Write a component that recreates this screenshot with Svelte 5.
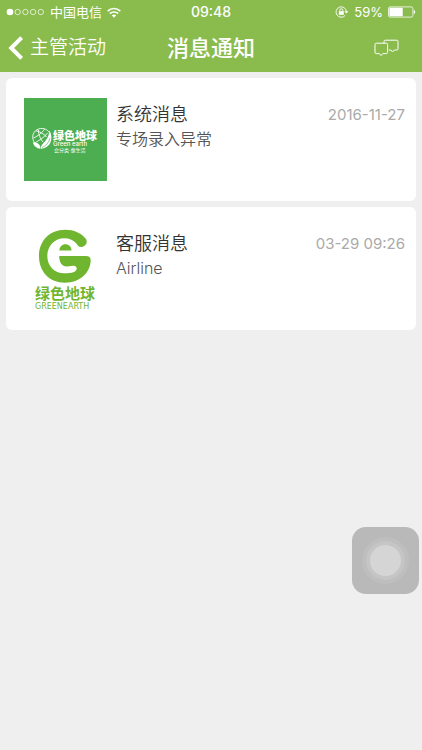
<script>
    let messages = [
        { id: 1, logo: "square", title: "系统消息", text: "专场录入异常", time: "2016-11-27" },
        { id: 2, logo: "round", title: "客服消息", text: "Airline", time: "03-29 09:26" }
    ];
    let dots = [1, 0, 0, 0, 0];
    let battery = 59;
</script>

<div class="page">
    <header>
        <div class="status">
            <div class="carrier">
                <svg class="dots" width="39" height="8" viewBox="0 0 39 8">
                    {#each dots as on, i}
                        <circle cx={4 + i * 7.7} cy="4" r={on ? 3.3 : 2.7} fill={on ? "#fff" : "none"} stroke="#fff" stroke-width={on ? 0 : 0.7} />
                    {/each}
                </svg>
                <span>中国电信</span>
                <svg width="14" height="11" viewBox="0 0 14 11" fill="none" stroke="#fff" stroke-width="1.7">
                    <path d="M0.7 4.2C4.3 0.6 9.7 0.6 13.3 4.2" />
                    <path d="M2.9 6.7C5.2 4.4 8.8 4.4 11.1 6.7" />
                    <path d="M7 10.8L4.8 8.5C6.1 7.3 7.9 7.3 9.2 8.5Z" fill="#fff" stroke="none" />
                </svg>
            </div>
            <strong>09:48</strong>
            <div class="power">
                <svg width="14" height="12" viewBox="0 0 14 12" fill="none" stroke="#fff" stroke-width="0.9">
                    <path d="M10.2 9.4A5.2 5.2 0 1 1 11.4 5.4" />
                    <path d="M9.4 5.2H13.4L11.4 7.6Z" fill="#fff" stroke="none" />
                    <rect x="3.8" y="5.2" width="5" height="3.6" fill="#fff" stroke="none" />
                    <path d="M4.8 5.5V4.2A1.5 1.5 0 0 1 7.8 4.2V5.5" />
                </svg>
                <span>{battery}%</span>
                <svg width="28" height="12" viewBox="0 0 28 12">
                    <rect x="0.5" y="0.9" width="24.4" height="10.2" rx="1.6" fill="none" stroke="#fff" stroke-width="0.8" />
                    <rect x="1.4" y="1.8" width={battery * 0.226} height="8.4" rx="0.6" fill="#fff" />
                    <path d="M25.8 4C27.6 4.5 27.6 7.5 25.8 8Z" fill="#fff" />
                </svg>
            </div>
        </div>
        <nav>
            <a class="back" href="#back">
                <svg width="16" height="24" viewBox="0 0 16 24" fill="none" stroke="#fff" stroke-width="4">
                    <path d="M13.6 1.6L3.2 12L13.6 22.4" />
                </svg>
                <span>主管活动</span>
            </a>
            <h1>消息通知</h1>
            <button class="chat" aria-label="聊天">
                <svg width="26" height="18" viewBox="0 0 26 18" fill="none" stroke="#fff" stroke-width="1" stroke-linejoin="round">
                    <path d="M10 4.2V2.4Q10 1.2 11.2 1.2H22.8Q24 1.2 24 2.4V9.8Q24 11 22.8 11H20.3L18.5 13L16.8 11H14.8" />
                    <path d="M2.2 4.2H12.4Q13.6 4.2 13.6 5.4V13.4Q13.6 14.6 12.4 14.6H8.8L7 16.6L5.4 14.6H2.2Q1 14.6 1 13.4V5.4Q1 4.2 2.2 4.2Z" />
                </svg>
            </button>
        </nav>
    </header>

    <main>
        {#each messages as item (item.id)}
            <a class="card" href="#message-{item.id}">
                {#if item.logo == "square"}
                    <svg class="logo" viewBox="0 0 83 83">
                        <rect width="83" height="83" fill="#4cae50" />
                        <g fill="none" stroke="#fff" stroke-width="0.9">
                            <path d="M11 45.5C7.5 41 8 34.5 13 31.7C17.5 29.2 23 30.6 25.2 34.5" />
                            <path d="M12 33C15 33 20 36 22.5 39" />
                            <path d="M9.5 40C14 38 19 34 20.5 31.2" />
                            <path d="M14.5 32C14 36 17 42 19 44" />
                            <path d="M11 45C15 42 20 40 23.5 35" />
                        </g>
                        <path d="M25.5 32.5C29.5 40 27.5 49.5 17 50.7C16 45.5 24.5 44 25.5 32.5Z" fill="#fff" />
                        <path d="M8.8 44.5C13 44 16.5 46 16.5 50.7C12.5 50.5 10 48 8.8 44.5Z" fill="#fff" />
                        <path d="M18 49.5C22 48 25 44.5 26 40" fill="none" stroke="#4cae50" stroke-width="0.6" />
                        <text class="brand" x="29" y="42">绿色地球</text>
                        <text class="latin" x="29" y="48">Green earth</text>
                        <text class="slogan" x="30" y="54">会分类·惠生活</text>
                    </svg>
                {:else}
                    <svg class="logo" viewBox="0 0 83 83">
                        <path
                            d="M62 12C57.5 6 50 2.7 41 2.7C25.5 2.7 15 14 15 29.2C15 44.5 25.5 55.7 41 55.7C56 55.7 66.7 45.5 66.7 33C66.7 30.2 65 29 62 29H40V12C46 12 50 14.5 52.5 17.8C54.5 20.3 58 20.8 60.5 18.8C62.8 17 63.3 14.4 62 12Z"
                            fill="#70b52f"
                        />
                        <path
                            d="M56.7 29C56.7 18 49.5 11.3 40.5 11.3C30.5 11.3 23.3 19 23.3 29C23.3 39 30.5 46.3 40 46.3C43.5 46.3 47 46 50 44.9C54.5 43 53 38 48.5 38.7C46.5 39 44.5 39.4 42.5 39.4C38 39.4 35.2 35.5 35.2 29Z"
                            fill="#fff"
                        />
                        <path d="M35.3 23.5C35.7 19.6 38 17.3 41.4 17.3C45 17.3 47.3 19.6 47.5 23.5Z" fill="#70b52f" />
                        <text class="name" x="11" y="72">绿色地球</text>
                        <text class="caption" x="11" y="82">GREENEARTH</text>
                    </svg>
                {/if}
                <div class="info">
                    <div class="row">
                        <h2>{item.title}</h2>
                        <time>{item.time}</time>
                    </div>
                    <p>{item.text}</p>
                </div>
            </a>
        {/each}
    </main>

    <button class="touch" aria-label="AssistiveTouch">
        <span></span>
    </button>
</div>

<style>
    :global(body) {
        background: #efefef;
    }
    .page {
        font-family: Inter, "Noto Sans CJK SC", sans-serif;
        color: #333;
    }
    a {
        color: inherit;
        text-decoration: none;
    }
    button {
        padding: 0;
        border: 0;
        background: none;
        cursor: pointer;
    }
    h1, h2, p {
        margin: 0;
    }
    svg {
        display: block;
        flex: none;
    }
    header {
        background: #8abb4d;
        color: white;
    }
    .status, nav {
        display: grid;
        grid-template-columns: 1fr auto 1fr;
        align-items: center;
    }
    .status {
        height: 24px;
        padding: 0 6px;
        font-size: 13px;
        line-height: 24px;
    }
    .status strong {
        font-size: 14px;
        font-weight: 500;
    }
    .carrier, .power {
        display: flex;
        align-items: center;
        gap: 5px;
    }
    .power {
        justify-content: flex-end;
    }
    nav {
        height: 48px;
        padding: 0 8px;
    }
    nav h1 {
        font-size: 22px;
        line-height: 32px;
        font-weight: 500;
    }
    .back {
        display: flex;
        align-items: center;
        gap: 6px;
        font-size: 19px;
        line-height: 28px;
        font-weight: 350;
    }
    .chat {
        justify-self: end;
        margin-right: 14px;
    }
    main {
        display: flex;
        flex-direction: column;
        gap: 6px;
        padding: 6px;
    }
    .card {
        display: flex;
        gap: 9px;
        padding: 20px 11px 20px 18px;
        border-radius: 6px;
        background: white;
    }
    .logo {
        width: 83px;
        height: 83px;
    }
    .info {
        flex: 1;
        padding-top: 5px;
    }
    .row {
        display: flex;
        justify-content: space-between;
        align-items: center;
    }
    h2 {
        font-size: 18px;
        line-height: 24px;
        font-weight: 350;
    }
    time {
        font-size: 15px;
        line-height: 24px;
        color: #aaa;
    }
    p {
        font-size: 16px;
        line-height: 24px;
        font-weight: 350;
        color: #555;
    }
    .brand {
        font-size: 11px;
        font-weight: 900;
        fill: #fff;
    }
    .latin {
        font-size: 6px;
        font-weight: 500;
        fill: #fff;
    }
    .slogan {
        font-size: 5px;
        fill: #fff;
    }
    .name {
        font-size: 15px;
        font-weight: 700;
        fill: #70b52f;
    }
    .caption {
        font-family: "DejaVu Sans", sans-serif;
        font-size: 8px;
        fill: #70b52f;
    }
    .touch {
        position: fixed;
        right: 3px;
        bottom: 156px;
        display: grid;
        place-items: center;
        width: 67px;
        height: 67px;
        border-radius: 14px;
        background: #b9b9b9;
    }
    .touch span {
        width: 31px;
        height: 31px;
        border-radius: 50%;
        background: #d5d5d5;
        box-shadow: 0 0 0 4px #c5c5c5, 0 0 0 8px #bebebe;
    }
</style>
